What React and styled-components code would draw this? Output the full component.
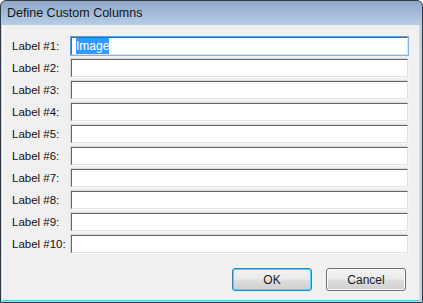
import React from "react";
import styled, { createGlobalStyle } from "styled-components";

const Global = createGlobalStyle`
  html, body { margin: 0; padding: 0; background: #ffffff; }
  body { font-family: "Liberation Sans", Arial, sans-serif; }
`;

const Window = styled.div`
  box-sizing: border-box;
  width: 423px;
  height: 303px;
  border: 1px solid #2f3b48;
  border-radius: 6px 6px 0 0;
  background: linear-gradient(to bottom, #8ea8c6 0px, #b6cde6 24px, #bdd5ec 100%);
  display: flex;
  flex-direction: column;
  overflow: hidden;
`;

const TitleBar = styled.div`
  height: 24px;
  flex: none;
  display: flex;
  align-items: center;
  padding-left: 6px;
  font-size: 12.5px;
  color: #161616;
`;

const Client = styled.div`
  flex: 1;
  margin: 0 2px 1px 1px;
  background: #f0f0f0;
  border-left: 1px solid #ffffff;
  border-right: 1px solid #dcdcdc;
  border-bottom: 1px solid #4fc3e8;
  display: flex;
  flex-direction: column;
  padding: 11px 0 0 0;
`;

const Rows = styled.div`
  display: flex;
  flex-direction: column;
  gap: 2px;
`;

const Row = styled.div`
  display: flex;
  align-items: center;
  height: 20px;
  padding: 0 10px 0 9px;
`;

const Label = styled.div`
  width: 58px;
  flex: none;
  font-size: 11.5px;
  color: #111111;
`;

const Field = styled.div`
  flex: 1;
  box-sizing: border-box;
  height: 20px;
  border: 1px solid;
  border-color: ${(p) => (p.$focused ? "#5b9ddf #7eb4ea #7eb4ea #5b9ddf" : "#dadada #f7f7f7 #f7f7f7 #dadada")};
  display: flex;
`;

const FieldInner = styled.div`
  flex: 1;
  background: #ffffff;
  border-top: 1px solid #646464;
  border-left: 1px solid #646464;
  border-right: 1px solid #e3e3e3;
  border-bottom: 1px solid #e3e3e3;
  display: flex;
  align-items: center;
  padding-left: 4px;
  font-size: 12px;
`;

const Selected = styled.span`
  background: #3399ff;
  color: #ffffff;
  padding: 1px 0;
  line-height: 14px;
`;

const Buttons = styled.div`
  display: flex;
  justify-content: flex-end;
  gap: 14px;
  padding: 0 13px 0 0;
  margin-top: 14px;
`;

const Button = styled.button`
  width: 80px;
  height: 23px;
  box-sizing: border-box;
  border-radius: 3px;
  border: 1px solid ${(p) => (p.$default ? "#3c7fb1" : "#707070")};
  box-shadow: inset 0 0 0 1px ${(p) => (p.$default ? "#48d7f6" : "#fbfbfb")};
  background: linear-gradient(to bottom, #f2f2f2 0%, #ebebeb 48%, #dddddd 52%, #cfcfcf 100%);
  font-family: "Liberation Sans", Arial, sans-serif;
  font-size: 12px;
  color: #1b1b1b;
  padding: 0;
`;

const labels = Array.from({ length: 10 }, (_, i) => `Label #${i + 1}:`);

export default function App() {
  return (
    <>
      <Global />
      <Window>
        <TitleBar>Define Custom Columns</TitleBar>
        <Client>
          <Rows>
            {labels.map((l, i) => (
              <Row key={l}>
                <Label>{l}</Label>
                <Field $focused={i === 0}>
                  <FieldInner>{i === 0 && <Selected>Image</Selected>}</FieldInner>
                </Field>
              </Row>
            ))}
          </Rows>
          <Buttons>
            <Button $default>OK</Button>
            <Button>Cancel</Button>
          </Buttons>
        </Client>
      </Window>
    </>
  );
}
